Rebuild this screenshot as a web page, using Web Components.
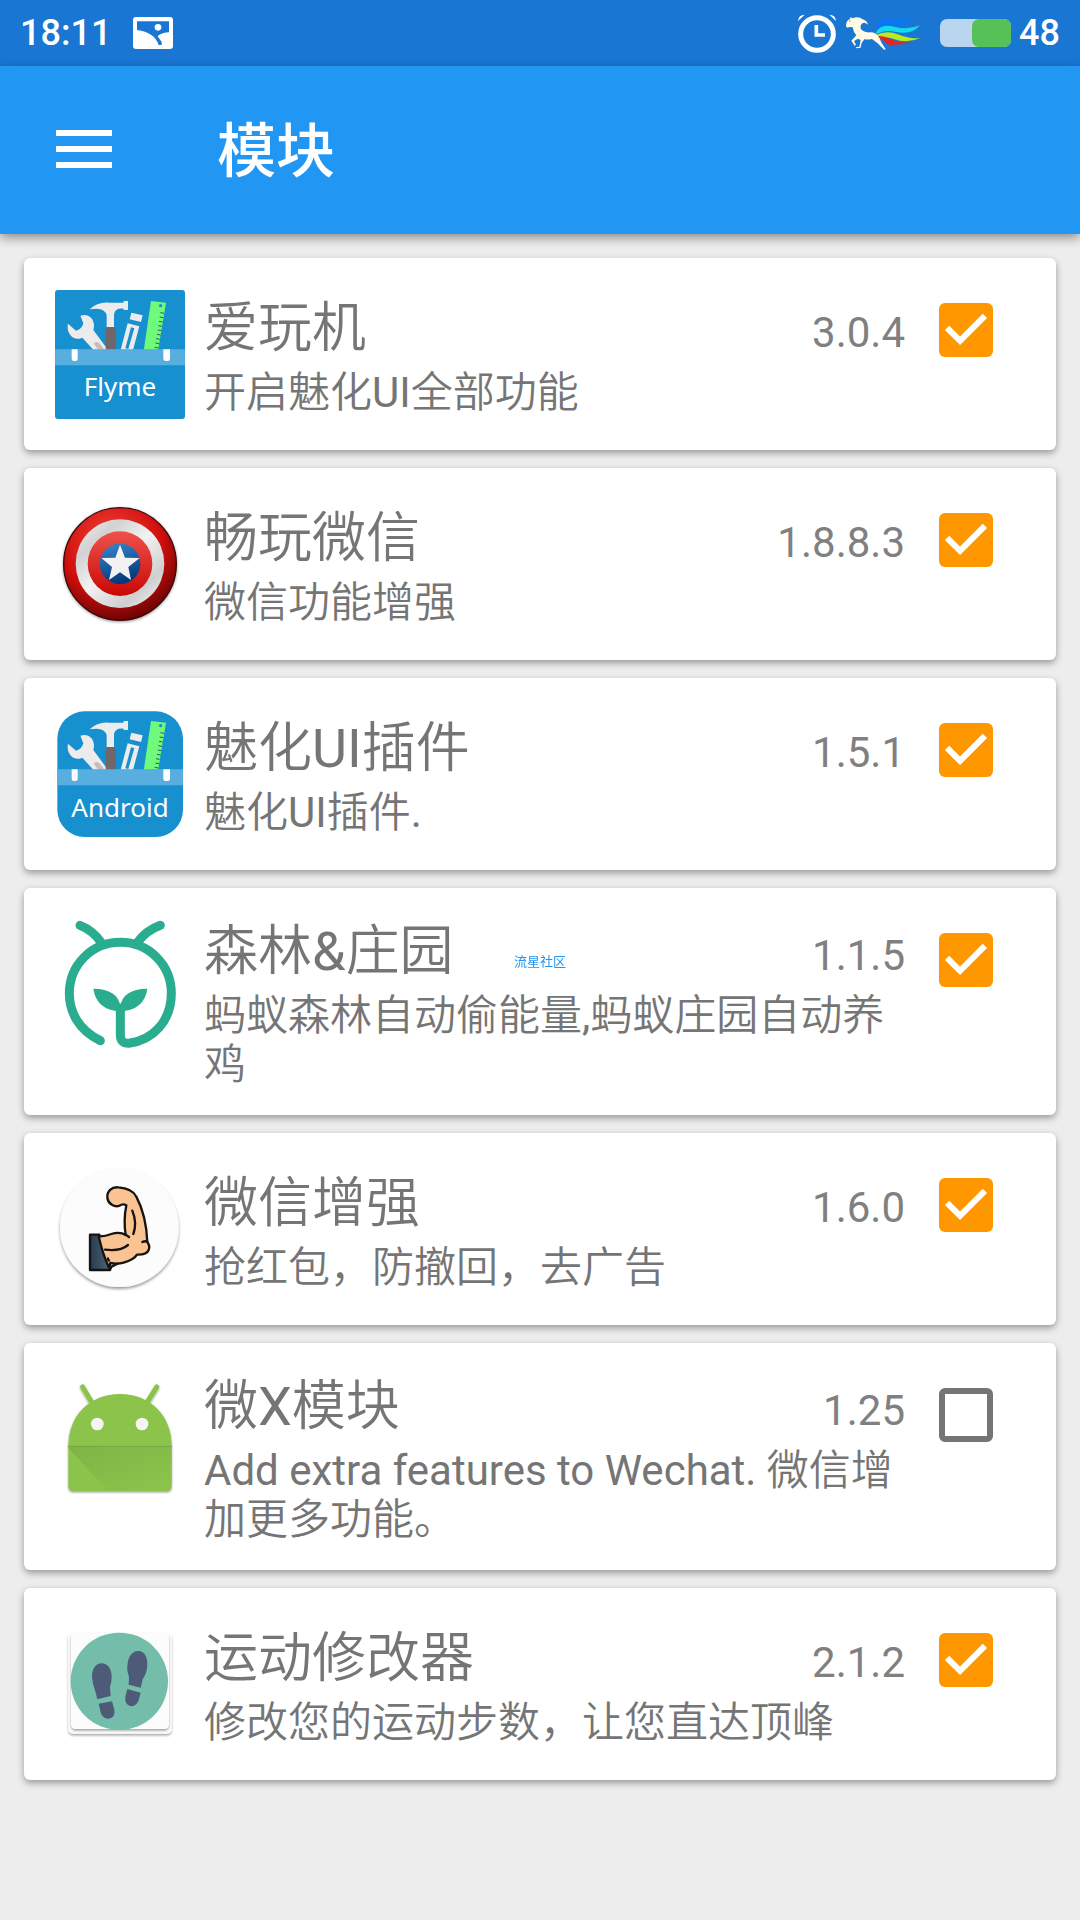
<!DOCTYPE html>
<html lang="zh-CN">
<head>
<meta charset="utf-8">
<meta name="viewport" content="width=device-width, initial-scale=1">
<title>模块</title>
<style>
    html {
        min-height: 100%;
        background-color: #ededed;
    }

    body {
        margin: 0;
        font-family: Roboto, "Noto Sans CJK SC", sans-serif;
        color: #757575;
    }
</style>
</head>
<body>

<status-bar time="18:11" battery="48"></status-bar>
<app-bar>模块</app-bar>
<module-list>
    <module-card version="3.0.4" checked>
        <tool-icon slot="icon">Flyme</tool-icon>
        爱玩机
        <span slot="description">开启魅化UI全部功能</span>
    </module-card>
    <module-card version="1.8.8.3" checked>
        <shield-icon slot="icon"></shield-icon>
        畅玩微信
        <span slot="description">微信功能增强</span>
    </module-card>
    <module-card version="1.5.1" checked>
        <tool-icon slot="icon" rounded>Android</tool-icon>
        魅化UI插件
        <span slot="description">魅化UI插件.</span>
    </module-card>
    <module-card version="1.1.5" checked>
        <forest-icon slot="icon"></forest-icon>
        森林&amp;庄园
        <span slot="description">蚂蚁森林自动偷能量,蚂蚁庄园自动养鸡</span>
    </module-card>
    <module-card version="1.6.0" checked>
        <muscle-icon slot="icon"></muscle-icon>
        微信增强
        <span slot="description">抢红包，防撤回，去广告</span>
    </module-card>
    <module-card version="1.25">
        <android-icon slot="icon"></android-icon>
        微X模块
        <span slot="description">Add extra features to Wechat. 微信增加更多功能。</span>
    </module-card>
    <module-card version="2.1.2" checked>
        <steps-icon slot="icon"></steps-icon>
        运动修改器
        <span slot="description">修改您的运动步数，让您直达顶峰</span>
    </module-card>
</module-list>
<water-mark>流星社区</water-mark>

<script>
class StatusBar extends HTMLElement {

    constructor() {
        super();
        this.shadowDOM = this.attachShadow({mode: "open"});
    }

    connectedCallback() {
        this.render();
    }

    render() {
        this.shadowDOM.innerHTML = `
        <style>
            :host {
                display: flex;
                align-items: center;
                justify-content: space-between;
                box-sizing: border-box;
                height: 66px;
                padding: 0 20px;
                background-color: #1976d2;
                color: white;
                font-size: 36px;
                font-weight: 500;
            }

            .group {
                display: flex;
                align-items: center;
            }

            .left {
                gap: 22px;
            }

            .right {
                gap: 8px;
            }

            svg {
                display: block;
            }

            .battery {
                display: flex;
                justify-content: flex-end;
                width: 71px;
                height: 28px;
                margin-left: 8px;
                border-radius: 7px;
                background-color: #bad5f0;
            }

            .battery > div {
                width: 55%;
                border-radius: 7px;
                background-color: #56c157;
            }
        </style>
        <div class="group left">
            <span>${this.getAttribute("time")}</span>
            <svg width="40" height="32" viewBox="0 0 120 96">
                <rect width="120" height="96" rx="9" fill="#fff"/>
                <path d="M12 13h96v33q-20 1-33 10-2 1 0 3l11 16v9h-9Q65 46 12 39z" fill="#1976d2"/>
                <circle cx="75" cy="31" r="10" fill="#fff"/>
            </svg>
        </div>
        <div class="group right">
            <svg width="38" height="40" viewBox="0 0 114 120">
                <circle cx="57" cy="63" r="49" fill="none" stroke="#fff" stroke-width="15"/>
                <path d="M55 36v30h26" fill="none" stroke="#fff" stroke-width="11"/>
                <path d="M0 24Q2 5 20 5zM114 24q-2-19-20-19z" fill="#fff"/>
            </svg>
            <svg width="80" height="34" viewBox="-6 0 240 102">
                <path d="M92 30q9-28 50-21 37 6 60-7-18 28-56 24-25-2-49 26z" fill="#0876f5"/>
                <path d="M90 50q13-29 54-18 43 11 78-4-26 31-74 19-32-7-56 7z" fill="#12dceb"/>
                <path d="M91 57q25-14 60-4 36 15 71 14-39 16-79 2-24-8-49-1z" fill="#b9e91e"/>
                <path d="M91 60q23-2 40 8 21 13 66 12-31 8-60 5l13 6q-23-1-31-13z" fill="#f51d18"/>
                <path d="M0 31Q0 12 13 8L12 3l8 4Q37-1 50 10q12 3 16 16-13-11-20-1-6 10 2 18 9 7 24 6 17-1 27 15l8 17 12 18-4 3-20-20-17-13q-16 3-22 0l-9 11-3 15-15 2 2-4 9-1 4-20-8-4-12 7 6 12-4 2-10-15 15-16q-9-9-11-24Q11 32 4 35z" fill="#fffbe5"/>
                <circle cx="11" cy="15" r="2" fill="#777"/>
            </svg>
            <div class="battery"><div></div></div>
            <span>${this.getAttribute("battery")}</span>
        </div>
        `;
    }
}

class AppBar extends HTMLElement {

    constructor() {
        super();
        this.shadowDOM = this.attachShadow({mode: "open"});
    }

    connectedCallback() {
        this.render();
    }

    render() {
        this.shadowDOM.innerHTML = `
        <style>
            :host {
                display: flex;
                align-items: center;
                gap: 81px;
                box-sizing: border-box;
                height: 168px;
                padding: 0 32px 2px;
                position: relative;
                background-color: #2196f3;
                box-shadow: 0 4px 10px rgba(0, 0, 0, 0.4);
                color: white;
            }

            button {
                padding: 24px;
                border: 0;
                background: none;
                cursor: pointer;
            }

            svg {
                display: block;
            }

            h1 {
                margin: 0;
                padding-bottom: 6px;
                font-size: 59px;
                font-weight: 500;
            }
        </style>
        <button type="button" aria-label="菜单">
            <svg width="56" height="38" viewBox="0 0 56 38">
                <path d="M0 3h56M0 19h56M0 35h56" stroke="#fff" stroke-width="6"/>
            </svg>
        </button>
        <h1><slot></slot></h1>
        `;
    }
}

class ModuleList extends HTMLElement {

    constructor() {
        super();
        this.shadowDOM = this.attachShadow({mode: "open"});
    }

    connectedCallback() {
        this.shadowDOM.innerHTML = `
        <style>
            :host {
                display: flex;
                flex-direction: column;
                gap: 18px;
                padding: 24px;
            }
        </style>
        <slot></slot>
        `;
    }
}

class ModuleCard extends HTMLElement {

    constructor() {
        super();
        this.shadowDOM = this.attachShadow({mode: "open"});
    }

    connectedCallback() {
        this.render();
    }

    render() {
        this.shadowDOM.innerHTML = `
        <style>
            :host {
                display: flex;
                align-items: flex-start;
                padding: 31px 63px 31px 31px;
                border-radius: 6px;
                background-color: white;
                box-shadow: 0 3px 7px rgba(0, 0, 0, 0.36);
            }

            .icon {
                flex: none;
                width: 130px;
                height: 130px;
            }

            .text {
                flex: 1;
                align-self: center;
                min-width: 0;
                margin: 0 34px -5px 19px;
                font-family: Roboto, "Noto Sans CJK SC DemiLight", "Noto Sans CJK SC", sans-serif;
            }

            .heading {
                display: flex;
                align-items: baseline;
                justify-content: space-between;
                line-height: 66px;
            }

            label {
                font-size: 54px;
            }

            .version {
                color: #808080;
                font-size: 42px;
            }

            .description {
                margin-top: 2px;
                font-size: 42px;
                line-height: 49px;
            }

            input {
                appearance: none;
                flex: none;
                width: 54px;
                height: 54px;
                margin: 14px 0 0;
                border: 6px solid #757575;
                border-radius: 6px;
                cursor: pointer;
            }

            input:checked {
                border: 0;
                background-color: #ff9800;
            }

            input:checked::before {
                content: "";
                display: block;
                height: 100%;
                background-color: white;
                clip-path: polygon(39% 78%, 11% 50%, 19% 42%, 39% 62%, 81% 20%, 89% 28%);
            }
        </style>
        <div class="icon"><slot name="icon"></slot></div>
        <div class="text">
            <div class="heading">
                <label for="enabled"><slot></slot></label>
                <span class="version">${this.getAttribute("version")}</span>
            </div>
            <div class="description"><slot name="description"></slot></div>
        </div>
        <input id="enabled" type="checkbox" ${this.hasAttribute("checked") ? "checked" : ""}>
        `;
    }
}

// Base of the launcher icons, each one draws on a 390 x 390 grid
class LauncherIcon extends HTMLElement {

    constructor() {
        super();
        this.shadowDOM = this.attachShadow({mode: "open"});
    }

    connectedCallback() {
        this.shadowDOM.innerHTML = `
        <style>
            :host {
                display: block;
            }

            svg {
                display: block;
                width: 100%;
                overflow: visible;
            }
        </style>
        <svg viewBox="0 0 390 390">${this.draw()}</svg>
        `;
    }
}

class ToolIcon extends LauncherIcon {

    draw() {
        const rounded = this.hasAttribute("rounded");
        const shape = rounded
            ? `<rect x="7" y="7" width="377" height="377" rx="82"/>`
            : `<rect y="3" width="390" height="387" rx="9"/>`;
        return `
        <clipPath id="shape">${shape}</clipPath>
        <clipPath id="box"><path d="M0 0h390v182H0z"/></clipPath>
        <g clip-path="url(#shape)">
            <path d="M0 0h390v390H0z" fill="#1790d0"/>
            <g clip-path="url(#box)">
                <path d="M76 80q29-8 39 18 4 12 0 25l45 61-40 4-38-42q-28 12-41-16-5-12-2-26l24 21q17-3 22-22z" fill="#ececec"/>
                <path d="M116 164q7-9 17-1l20 24h-20z" fill="#c5bdb9"/>
                <path d="M104 61q23-22 57-20h45v-5h13v27h-13v-4q-26-3-29 17v40h-22V79q-5-20-30-20-12 0-21 2z" fill="#ececec"/>
                <path d="M155 114h22l6 11v62h-31v-62z" fill="#71676a"/>
                <path d="M229 71l34 8-5 20-34-8zM218 103l35 9-20 75-36-5z" fill="#ececec"/>
                <path d="M228 115l10 3-18 62-9-2z" fill="#1790d0"/>
                <path d="M288 36l45 5-25 150-42-5z" fill="#70fa7c"/>
                <circle cx="317" cy="50" r="5" fill="#1790d0"/>
                <path d="M316 71l11 2M314 84l11 2M312 97l11 2M310 110l11 2M308 123l11 2M306 136l11 2M303 149l11 2M301 162l11 2M299 175l11 2" stroke="#365c49" stroke-width="3"/>
            </g>
            <path d="M0 181h390v48H0z" fill="#58aede"/>
            <path d="M50 181h18v28q0 7-7 7h-4q-7 0-7-7zM325 181h20v28q0 7-7 7h-6q-7 0-7-7z" fill="#fff"/>
        </g>
        <text x="195" y="${rounded ? 325 : 321}" text-anchor="middle" fill="#fff" font-family="Noto Sans, sans-serif" font-size="78">${this.textContent}</text>
        `;
    }
}

class ShieldIcon extends LauncherIcon {

    draw() {
        return `
        <defs>
            <radialGradient id="red" cx="0.42" cy="0.3" r="0.75">
                <stop offset="0" stop-color="#f4463d"/>
                <stop offset="0.6" stop-color="#cf0e0c"/>
                <stop offset="1" stop-color="#5d0202"/>
            </radialGradient>
            <linearGradient id="silver" x2="0.9" y2="1">
                <stop offset="0" stop-color="#f3f3f3"/>
                <stop offset="0.25" stop-color="#d2d2d2"/>
                <stop offset="0.5" stop-color="#f2f2f2"/>
                <stop offset="0.8" stop-color="#cfcfcf"/>
                <stop offset="1" stop-color="#f0f0f0"/>
            </linearGradient>
            <linearGradient id="core" x2="0" y2="1">
                <stop offset="0" stop-color="#ef514c"/>
                <stop offset="1" stop-color="#c90805"/>
            </linearGradient>
            <linearGradient id="blue" x2="0.3" y2="1">
                <stop offset="0" stop-color="#3c89cb"/>
                <stop offset="1" stop-color="#043a7d"/>
            </linearGradient>
            <filter id="soft" x="-20%" y="-20%" width="140%" height="140%">
                <feGaussianBlur stdDeviation="5"/>
            </filter>
        </defs>
        <circle cx="195" cy="198" r="171" opacity="0.4" filter="url(#soft)"/>
        <circle cx="195" cy="195" r="169" fill="url(#red)" stroke="#3f0808" stroke-width="4"/>
        <circle cx="195" cy="194" r="133" fill="url(#silver)"/>
        <circle cx="195" cy="194" r="97" fill="url(#core)"/>
        <circle cx="195" cy="194" r="61" fill="url(#blue)"/>
        <path d="M195 137l15 39 44 1-34 27 8 39-33-23-33 23 9-39-32-27 42-1z" fill="#f2f2f2"/>
        `;
    }
}

class ForestIcon extends LauncherIcon {

    draw() {
        return `
        <g fill="none" stroke="#2aac8f" stroke-width="27" stroke-linecap="round" stroke-linejoin="round">
            <path d="M136 365C70 333 43 278 43 223C43 137 111 70 196 70s153 67 153 153c0 85-57 141-127 150q-26 1-26-26v-80"/>
            <path d="M75 19q39 15 65 53M316 19q-42 15-70 53"/>
        </g>
        <path d="M115 209q75 1 81 54 6-53 81-54-9 64-81 68-72-4-81-68z" fill="#2aac8f"/>
        `;
    }
}

class MuscleIcon extends LauncherIcon {

    draw() {
        return `
        <defs>
            <filter id="drop" x="-20%" y="-20%" width="140%" height="140%">
                <feDropShadow dx="0" dy="6" stdDeviation="4" flood-opacity="0.4"/>
            </filter>
            <linearGradient id="cuff" x2="1">
                <stop offset="0" stop-color="#263b4e"/>
                <stop offset="1" stop-color="#4f687a"/>
            </linearGradient>
        </defs>
        <circle cx="193" cy="191" r="178" fill="#fcfcfc" filter="url(#drop)"/>
        <g stroke="#161412" stroke-width="7" stroke-linecap="round" stroke-linejoin="round">
            <path d="M105 212h28q8 57 35 98l-3 8h-60z" fill="url(#cuff)"/>
            <path d="M131 217q18 1 38-7 26-8 43 3-7-44 2-89-11-6-20 1c-16 6-34-5-37-23-2-20 13-34 33-32q42 3 54 28c20 38 31 83 33 137q9 11 4 23-6 15-35 14-9 15-40 24-20 6-40 1l-4 14q-20-43-31-94z" fill="#fac391"/>
            <path d="M232 140q15 38 3 70M212 212l10 7M150 257q46 6 69-14M167 310l20-11M277 233q-7-3-15 1M162 290q-4-3-3-7" fill="none"/>
        </g>
        `;
    }
}

class AndroidIcon extends LauncherIcon {

    draw() {
        return `
        <defs>
            <filter id="drop" x="-20%" y="-20%" width="140%" height="140%">
                <feDropShadow dx="0" dy="4" stdDeviation="3" flood-opacity="0.4"/>
            </filter>
            <linearGradient id="shade" x2="0.9" y2="1">
                <stop offset="0" stop-color="#79ad45"/>
                <stop offset="1" stop-color="#8cc44b"/>
            </linearGradient>
        </defs>
        <g filter="url(#drop)">
            <path d="M83 39l28 47M305 39l-29 47" stroke="#8bc34a" stroke-width="15" stroke-linecap="round"/>
            <path d="M40 216C40 124 105 60 195 60s155 64 155 156v121q0 14-14 14H54q-14 0-14-14z" fill="#8cc44b"/>
        </g>
        <path d="M40 216h310v115L240 351h-81L40 222z" fill="url(#shade)" opacity="0.7"/>
        <path d="M40 217h310" stroke="#76a643" stroke-width="3"/>
        <circle cx="127" cy="150" r="19" fill="#f5f5f5"/>
        <circle cx="261" cy="150" r="19" fill="#f5f5f5"/>
        `;
    }
}

class StepsIcon extends LauncherIcon {

    draw() {
        return `
        <defs>
            <filter id="drop" x="-20%" y="-20%" width="140%" height="140%">
                <feDropShadow dx="0" dy="5" stdDeviation="3" flood-opacity="0.35"/>
            </filter>
        </defs>
        <rect x="40" y="42" width="310" height="302" rx="14" fill="#fcfcfc" filter="url(#drop)"/>
        <rect x="48" y="40" width="294" height="290" rx="14" fill="#fcfcfc" filter="url(#drop)"/>
        <circle cx="193" cy="187" r="146" fill="#73bdaa"/>
        <g fill="#4d5b78">
            <path d="M127 241l-6-24q-9-22-10-44c0-23 11-40 29-40s30 16 30 41q0 15-5 31l2 26zM131 254l40-7 7 25q4 24-17 27-18 1-24-19z"/>
            <path d="M257 206l-36-9 1-24q-8-19-4-40c3-23 15-37 32-37 18 0 28 18 27 42q-1 24-14 43zM217 210l40 11-6 23q-8 20-25 17-18-6-15-28z"/>
        </g>
        `;
    }
}

class WaterMark extends HTMLElement {

    constructor() {
        super();
        this.shadowDOM = this.attachShadow({mode: "open"});
    }

    connectedCallback() {
        this.shadowDOM.innerHTML = `
        <style>
            :host {
                display: grid;
                place-items: center;
                position: fixed;
                inset: 0;
                pointer-events: none;
                color: #2196f3;
                font-size: 13px;
            }
        </style>
        <span><slot></slot></span>
        `;
    }
}

customElements.define("status-bar", StatusBar);
customElements.define("app-bar", AppBar);
customElements.define("module-list", ModuleList);
customElements.define("module-card", ModuleCard);
customElements.define("tool-icon", ToolIcon);
customElements.define("shield-icon", ShieldIcon);
customElements.define("forest-icon", ForestIcon);
customElements.define("muscle-icon", MuscleIcon);
customElements.define("android-icon", AndroidIcon);
customElements.define("steps-icon", StepsIcon);
customElements.define("water-mark", WaterMark);
</script>
</body>
</html>
